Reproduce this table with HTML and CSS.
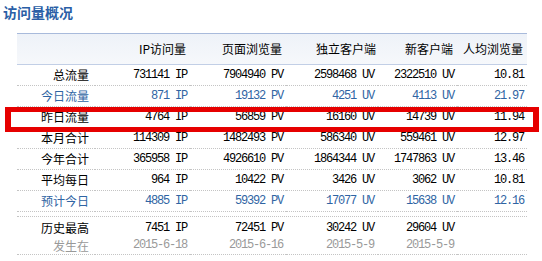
FILE: index.html
```html
<!DOCTYPE html>
<html lang="zh">
<head>
<meta charset="utf-8">
<link rel="stylesheet" href="styles.css">
</head>
<body>
<div class="page">
  <h1 class="title">访问量概况</h1>
  <div class="wrap">
    <table class="stats">
      <colgroup>
        <col class="c-label"><col class="c1"><col class="c2"><col class="c3"><col class="c4"><col class="c5">
      </colgroup>
      <thead>
        <tr>
          <th></th><th class="p1">IP访问量</th><th class="p2">页面浏览量</th><th class="p3h">独立客户端</th><th class="p4">新客户端</th><th class="p5">人均浏览量</th>
        </tr>
      </thead>
      <tbody>
        <tr><td class="label">总流量</td><td class="num p1">731141 IP</td><td class="num p2">7904940 PV</td><td class="num p3">2598468 UV</td><td class="num p4">2322510 UV</td><td class="num p5">10.81</td></tr>
        <tr class="blue"><td class="label">今日流量</td><td class="num p1">871 IP</td><td class="num p2">19132 PV</td><td class="num p3">4251 UV</td><td class="num p4">4113 UV</td><td class="num p5">21.97</td></tr>
        <tr><td class="label">昨日流量</td><td class="num p1">4764 IP</td><td class="num p2">56859 PV</td><td class="num p3">16160 UV</td><td class="num p4">14739 UV</td><td class="num p5">11.94</td></tr>
        <tr><td class="label">本月合计</td><td class="num p1">114309 IP</td><td class="num p2">1482493 PV</td><td class="num p3">586340 UV</td><td class="num p4">559461 UV</td><td class="num p5">12.97</td></tr>
        <tr><td class="label">今年合计</td><td class="num p1">365958 IP</td><td class="num p2">4926610 PV</td><td class="num p3">1864344 UV</td><td class="num p4">1747863 UV</td><td class="num p5">13.46</td></tr>
        <tr><td class="label">平均每日</td><td class="num p1">964 IP</td><td class="num p2">10422 PV</td><td class="num p3">3426 UV</td><td class="num p4">3062 UV</td><td class="num p5">10.81</td></tr>
        <tr class="blue"><td class="label">预计今日</td><td class="num p1">4885 IP</td><td class="num p2">59392 PV</td><td class="num p3">17077 UV</td><td class="num p4">15638 UV</td><td class="num p5">12.16</td></tr>
        <tr class="spacer"><td colspan="6"></td></tr>
        <tr class="top"><td class="label">历史最高</td><td class="num p1">7451 IP</td><td class="num p2">72451 PV</td><td class="num p3">30242 UV</td><td class="num p4">29604 UV</td><td class="num p5"></td></tr>
        <tr class="date"><td class="label">发生在</td><td class="num p1">2015-6-18</td><td class="num p2">2015-6-16</td><td class="num p3">2015-5-9</td><td class="num p4">2015-5-9</td><td class="num p5"></td></tr>
      </tbody>
    </table>
    <div class="highlight"></div>
  </div>
</div>
</body>
</html>
```
FILE: styles.css
```css
html, body {
  margin: 0;
  padding: 0;
  background: #fff;
}
.page {
  position: relative;
  width: 542px;
  height: 261px;
  font-family: "Noto Sans CJK SC", "Liberation Sans", sans-serif;
}
.title {
  margin: 0;
  padding: 3px 0 0 3px;
  height: 33px;
  box-sizing: border-box;
  font-size: 14px;
  line-height: 18px;
  font-weight: bold;
  color: #2a5ea6;
  letter-spacing: 0;
}
.wrap {
  padding-left: 17px;
}
.stats {
  table-layout: fixed;
  width: 510px;
  border-collapse: separate;
  border-spacing: 0;
  font-size: 12px;
  color: #000;
}
.c-label { width: 78px; }
.c1 { width: 95px; }
.c2 { width: 96px; }
.c3 { width: 92px; }
.c4 { width: 79px; }
.c5 { width: 70px; }
.stats th {
  font-weight: normal;
  text-align: right;
  padding: 0;
  line-height: 30px;
  height: 30px;
  border-top: 1px solid #a8badb;
  border-bottom: 1px solid #c2cfe6;
  background: linear-gradient(#eef2f8, #f6f8fb);
  color: #000;
  white-space: nowrap;
}
.stats td {
  padding: 0;
  text-align: right;
  line-height: 20px;
  height: 20px;
  border-bottom: 1px dotted #c4c4c4;
  white-space: nowrap;
}
.stats td.label {
  padding-right: 6px;
}
.num {
  font-family: "Liberation Mono", "DejaVu Sans Mono", monospace;
  font-size: 12px;
  letter-spacing: -1.2px;
}
.p1 { padding-right: 3px !important; }
.p2 { padding-right: 3px !important; }
.p3 { padding-right: 4px !important; }
.p3h { padding-right: 2px !important; }
.p4 { padding-right: 3px !important; }
.p5 { padding-right: 3px !important; }
.stats th.p1, .stats th.p2, .stats th.p4, .stats th.p5 { padding-right: 4px !important; }
.blue td { color: #2f64a3; }
.stats tr.spacer td {
  height: 4px;
  line-height: 4px;
}
.stats tr.top td {
  border-bottom: none;
  height: 18px;
  line-height: 18px;
  padding-top: 2px;
}
.stats tr.date td {
  height: 17px;
  line-height: 17px;
  color: #999;
}
.highlight {
  position: absolute;
  left: 5px;
  top: 107px;
  width: 534px;
  height: 25px;
  box-sizing: border-box;
  border: 5px solid #e60000;
  border-left-width: 6px;
  border-right-width: 6px;
  pointer-events: none;
}
```
